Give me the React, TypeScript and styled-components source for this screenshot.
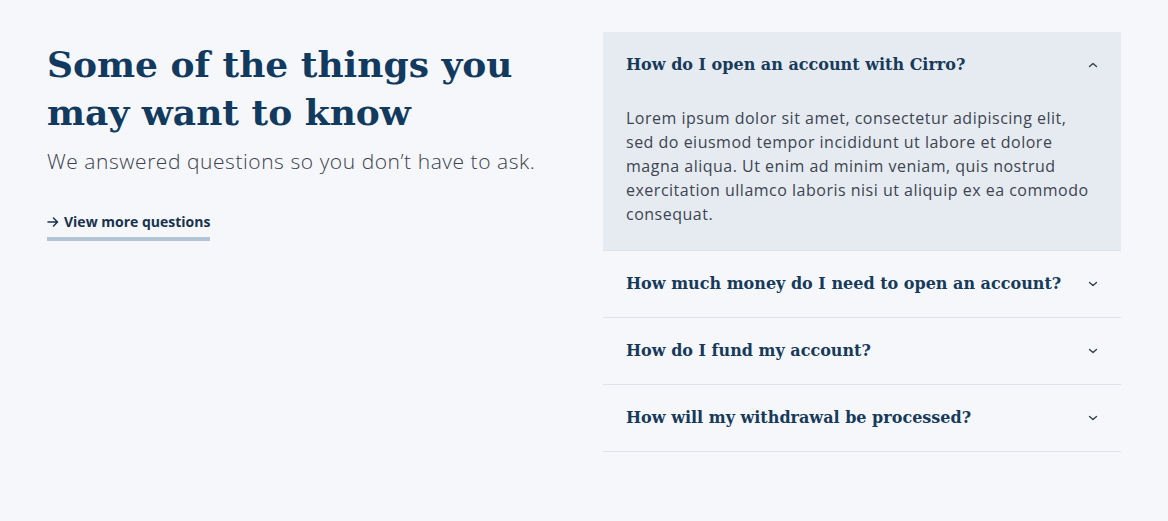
import React, { useState } from "react";
import styled, { createGlobalStyle } from "styled-components";

const Global = createGlobalStyle`
  html, body { margin: 0; padding: 0; background: #f5f7fa; }
  * { box-sizing: border-box; }
`;

const Page = styled.div`
  display: grid;
  grid-template-columns: 556px 518px;
  padding: 32px 47px;
  min-height: 521px;
  background: #f5f7fa;
`;

const Intro = styled.div`
  display: flex;
  flex-direction: column;
  align-items: flex-start;
  padding-top: 8px;
`;

const Heading = styled.h1`
  margin: 0;
  font-family: "DejaVu Serif", "Liberation Serif", serif;
  font-weight: 700;
  font-size: 36px;
  line-height: 48px;
  color: #123a5f;
`;

const Sub = styled.p`
  margin: 10px 0 0;
  font-family: "Open Sans", sans-serif;
  font-weight: 300;
  font-size: 21px;
  line-height: 30px;
  letter-spacing: 0.55px;
  color: #3b4150;
`;

const MoreLink = styled.a`
  margin-top: 36px;
  display: inline-flex;
  align-items: center;
  gap: 5px;
  font-family: "Open Sans", sans-serif;
  font-weight: 700;
  font-size: 14px;
  line-height: 20px;
  color: #18324f;
  text-decoration: none;
  padding-bottom: 5px;
  border-bottom: 4px solid #b3c5d5;
`;

const List = styled.div`
  display: flex;
  flex-direction: column;
`;

const Item = styled.div<{ $open: boolean }>`
  background: ${(p) => (p.$open ? "#e6ebf1" : "transparent")};
  border-bottom: 1px solid #dfe4ea;
`;

const Header = styled.button`
  width: 100%;
  display: flex;
  align-items: center;
  justify-content: space-between;
  padding: 19px 22px 19px 23px;
  background: none;
  border: 0;
  cursor: pointer;
  text-align: left;
`;

const Question = styled.span`
  font-family: "DejaVu Serif", "Liberation Serif", serif;
  font-weight: 700;
  font-size: 16px;
  line-height: 28px;
  color: #173a5a;
`;

const Answer = styled.p`
  margin: 0;
  padding: 8px 24px 24px 23px;
  font-family: "Open Sans", sans-serif;
  font-size: 16px;
  line-height: 24px;
  letter-spacing: 0.5px;
  color: #3d4452;
`;

const Chevron = ({ up }: { up: boolean }) => (
  <svg width="12" height="12" viewBox="0 0 12 12" fill="none">
    <path
      d={up ? "M2.5 7.5 L6 4.5 L9.5 7.5" : "M2.5 4.5 L6 7.5 L9.5 4.5"}
      stroke="#2b3a4d"
      strokeWidth="1.3"
      strokeLinecap="round"
      strokeLinejoin="round"
    />
  </svg>
);

const Arrow = () => (
  <svg width="12" height="10" viewBox="0 0 12 10" fill="none">
    <path
      d="M1 5 H10.5 M6.5 1 L10.5 5 L6.5 9"
      stroke="#18324f"
      strokeWidth="1.5"
      strokeLinecap="round"
      strokeLinejoin="round"
    />
  </svg>
);

const faqs = [
  {
    q: "How do I open an account with Cirro?",
    a: "Lorem ipsum dolor sit amet, consectetur adipiscing elit, sed do eiusmod tempor incididunt ut labore et dolore magna aliqua. Ut enim ad minim veniam, quis nostrud exercitation ullamco laboris nisi ut aliquip ex ea commodo consequat.",
  },
  { q: "How much money do I need to open an account?", a: "" },
  { q: "How do I fund my account?", a: "" },
  { q: "How will my withdrawal be processed?", a: "" },
];

export default function App() {
  const [open, setOpen] = useState(0);
  return (
    <>
      <Global />
      <Page>
        <Intro>
          <Heading>
            Some of the things you
            <br />
            may want to know
          </Heading>
          <Sub>We answered questions so you don’t have to ask.</Sub>
          <MoreLink href="#">
            <Arrow />
            View more questions
          </MoreLink>
        </Intro>
        <List>
          {faqs.map((f, i) => (
            <Item key={i} $open={open === i}>
              <Header onClick={() => setOpen(open === i ? -1 : i)}>
                <Question>{f.q}</Question>
                <Chevron up={open === i} />
              </Header>
              {open === i && <Answer>{f.a}</Answer>}
            </Item>
          ))}
        </List>
      </Page>
    </>
  );
}
